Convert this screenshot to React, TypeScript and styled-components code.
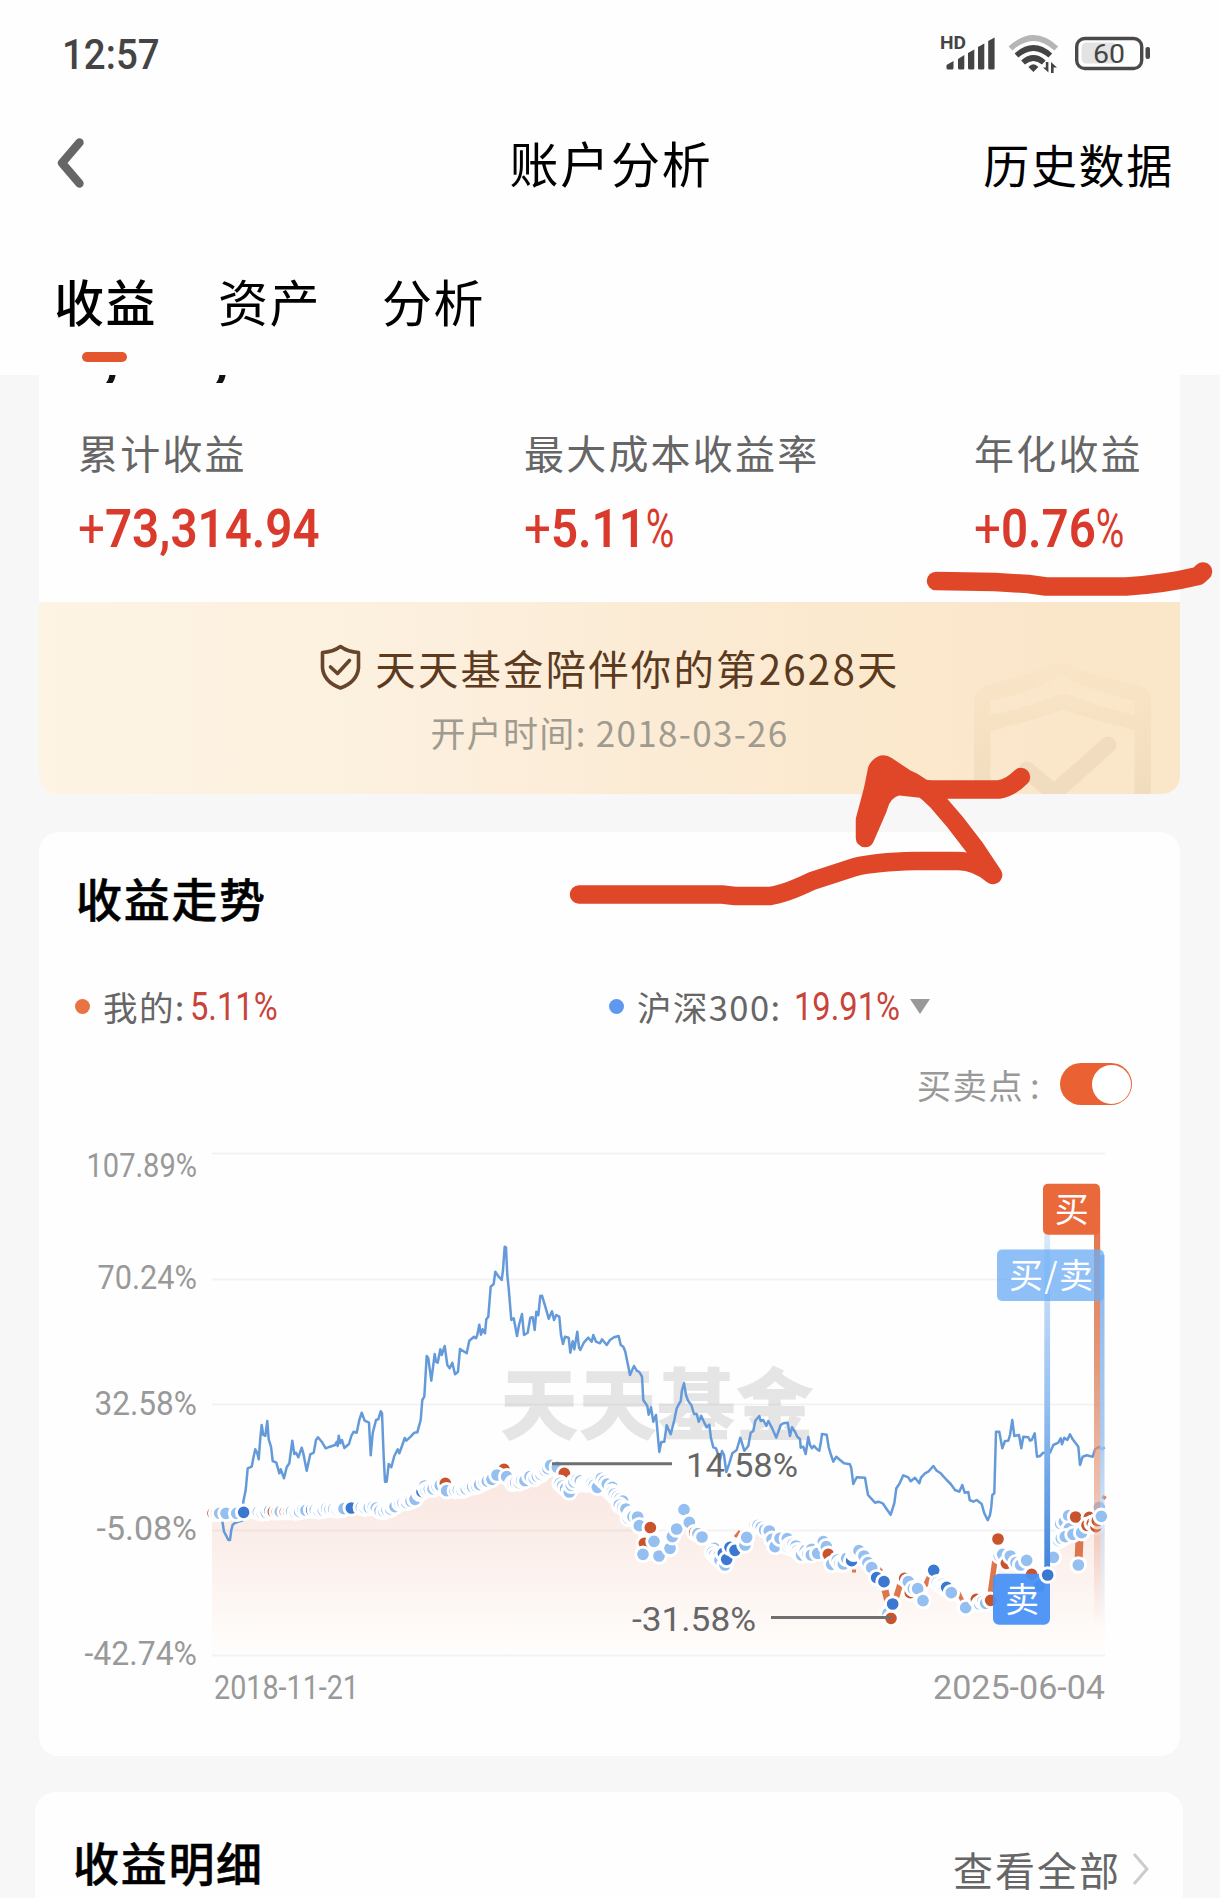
import React from "react";
import styled, { createGlobalStyle } from "styled-components";

const CJK = '"Noto Sans CJK SC", "Noto Sans", sans-serif';
const LATIN = 'Roboto, "Noto Sans CJK SC", sans-serif';

const GlobalStyle = createGlobalStyle`
  * { box-sizing: border-box; }
  body { margin: 0; background: #f7f7f7; font-family: ${CJK}; }
  svg { display: block; }
`;

const Screen = styled.div`
  position: relative;
  width: 1220px;
  height: 1898px;
  overflow: hidden;
  background: #f7f7f7;
  display: flex;
  flex-direction: column;
  white-space: nowrap;
`;

const TopArea = styled.header`
  height: 375px;
  flex: none;
  background: #fefefe;
  display: flex;
  flex-direction: column;
`;

const StatusBar = styled.div`
  height: 107px;
  padding: 0 68px 0 62px;
  display: flex;
  align-items: center;
  justify-content: space-between;
`;

const Clock = styled.span`
  font: 500 43px/60px ${LATIN};
  color: #444;
  transform: scaleX(0.895);
  transform-origin: left;
`;

const NavBar = styled.div`
  height: 112px;
  padding: 0 46px 0 56px;
  display: grid;
  grid-template-columns: 1fr auto 1fr;
  align-items: center;
`;

const NavTitle = styled.h1`
  margin: -2px 8px 0 0;
  font-size: 49px;
  font-weight: 400;
  line-height: 70px;
  letter-spacing: 1.8px;
  color: #000;
`;

const NavLink = styled.span`
  justify-self: end;
  margin-top: -1px;
  font-size: 46px;
  line-height: 70px;
  letter-spacing: 1.7px;
  color: #000;
`;

const Tabs = styled.nav`
  display: flex;
  gap: 61px;
  padding: 46px 0 0 54px;
`;

const Tab = styled.div<{ $active?: boolean }>`
  display: flex;
  flex-direction: column;
  align-items: center;
  gap: 16px;
  font-size: 50px;
  line-height: 71px;
  letter-spacing: 1.5px;
  font-weight: ${(p) => (p.$active ? 500 : 400)};
  color: #000;
  &::after {
    content: "";
    width: 45px;
    height: 10px;
    margin-right: 3px;
    border-radius: 5px;
    background: ${(p) => (p.$active ? "#e4572e" : "transparent")};
  }
`;

const Summary = styled.section`
  flex: none;
  width: 1141px;
  height: 419px;
  margin: 0 0 38px 39px;
  background: #fefefe;
  border-radius: 0 0 18px 18px;
  overflow: hidden;
`;

const ClippedAmount = styled.div`
  height: 8px;
  overflow: hidden;
  display: flex;
  gap: 97px;
  padding-left: 69px;
  font: italic 700 54px/8px ${LATIN};
  color: #111;
  span { position: relative; top: -20px; }
`;

const Metrics = styled.div`
  height: 219px;
  padding: 40px 0 0 39px;
  display: grid;
  grid-template-columns: 446px 450px auto;
  align-content: start;
`;

const MetricLabel = styled.div`
  font-size: 40px;
  line-height: 58px;
  letter-spacing: 2.2px;
  color: #666;
`;

const MetricValue = styled.div`
  margin-top: 12px;
  font: 600 53.5px/72px ${LATIN};
  color: #d93a2c;
  transform: scaleX(0.888);
  transform-origin: left;
`;

const Sign = styled.span`
  font-weight: 400;
`;

const Percent = styled.span`
  display: inline-block;
  font-weight: 400;
  transform: scaleX(0.82);
  transform-origin: left;
`;

const Banner = styled.div`
  position: relative;
  height: 192px;
  padding: 37px 0 0;
  background: linear-gradient(90deg, #fdf4e3 0%, #fcefdd 35%, #fbe9cf 68%, #fae6c8 100%);
  display: flex;
  flex-direction: column;
  align-items: center;
`;

const BannerTitle = styled.div`
  display: flex;
  align-items: center;
  gap: 14px;
  margin-right: 0;
  font-size: 40.4px;
  line-height: 58px;
  letter-spacing: 2.2px;
  color: #5c3a1e;
`;

const BannerDate = styled.div`
  margin-top: 10px;
  font-size: 35px;
  line-height: 50px;
  letter-spacing: 1.3px;
  color: #a09b90;
`;

const BannerMark = styled.svg`
  position: absolute;
  right: 28px;
  bottom: 0;
`;

const TrendCard = styled.section`
  flex: none;
  width: 1141px;
  height: 924px;
  margin: 0 0 36px 39px;
  border-radius: 20px;
  background: #fefefe;
`;

const SectionTitle = styled.h2`
  margin: 0;
  font-size: 46px;
  line-height: 66px;
  font-weight: 500;
  letter-spacing: 1.7px;
  color: #000;
  -webkit-text-stroke: 0.5px #000;
`;

const TrendHead = styled.div`
  padding: 32px 0 0 37px;
`;

const Legend = styled.div`
  height: 50px;
  margin-top: 50px;
  padding-left: 36px;
  display: grid;
  grid-template-columns: 534px auto;
`;

const LegendItem = styled.div`
  display: flex;
  align-items: center;
`;

const Dot = styled.i<{ $color: string }>`
  width: 15px;
  height: 15px;
  margin-right: 13px;
  border-radius: 50%;
  background: ${(p) => p.$color};
`;

const LegendName = styled.span<{ $width: number }>`
  width: ${(p) => p.$width}px;
  font-size: 34.5px;
  line-height: 50px;
  letter-spacing: 1.4px;
  color: #666;
`;

const LegendValue = styled.span<{ $width: number }>`
  width: ${(p) => p.$width}px;
  margin-top: 2px;
  font: 400 38px/50px ${LATIN};
  color: #c8443a;
  transform: scaleX(0.86);
  transform-origin: left;
`;

const Caret = styled.i`
  border: 10px solid transparent;
  border-top: 15px solid #999;
  border-bottom: 0;
`;

const ToggleRow = styled.div`
  height: 50px;
  margin-top: 29px;
  padding-right: 48px;
  display: flex;
  justify-content: flex-end;
  align-items: center;
  font-size: 34.5px;
  line-height: 50px;
  letter-spacing: 1.3px;
  color: #999;
`;

const Colon = styled.span`
  margin: 0 19px 0 6px;
`;

const Toggle = styled.div`
  width: 72px;
  height: 42px;
  border-radius: 21px;
  background: #ea6234;
  padding: 1.5px;
  display: flex;
  justify-content: flex-end;
  &::after {
    content: "";
    width: 39px;
    height: 39px;
    border-radius: 50%;
    background: #fff;
  }
`;

const ChartArea = styled.div`
  margin-top: 21px;
`;

const DetailCard = styled.section`
  flex: none;
  width: 1148px;
  height: 140px;
  margin-left: 35px;
  padding: 36px 33px 0 38px;
  border-radius: 20px;
  background: #fefefe;
  display: flex;
  justify-content: space-between;
  align-items: flex-start;
`;

const MoreLink = styled.div`
  margin-top: 12px;
  display: flex;
  align-items: center;
  gap: 11px;
  font-size: 40px;
  line-height: 58px;
  letter-spacing: 2px;
  color: #666;
`;

const Markup = styled.svg`
  position: absolute;
  inset: 0;
  pointer-events: none;
`;

const AxisText = styled.text`
  font: 400 32.4px ${LATIN};
  fill: #999;
`;

const CalloutText = styled.text`
  font: 400 34px ${LATIN};
  fill: #666;
`;

const TagText = styled.text`
  font: 400 34px ${CJK};
  fill: #fff;
  text-anchor: middle;
`;

const WatermarkText = styled.text`
  font: 900 78px ${CJK};
  fill: #e5e5e5;
`;

/* ---------- chart data, stored at three units per pixel ---------- */

type Pt = [number, number];

const parse = (s: string, ox: number, oy: number): Pt[] =>
  s.trim().split(/\s+/).map((p) => {
    const [x, y] = p.split(",").map(Number);
    return [ox + x / 3, oy + y / 3];
  });

const toPath = (pts: Pt[]) =>
  "M" + pts.map(([x, y]) => `${x.toFixed(1)} ${y.toFixed(1)}`).join("L");

const INDEX_LINE: Pt[] = [
  ...parse(
    `38,940 62,945 68,970 72,995 80,1010 85,1020 90,1020 94,990 98,974 106,968 130,960 130,905
     137,870 143,805 155,800 160,775 166,748 172,760 176,778 181,715 185,675 190,705 196,708 202,663
     206,718 213,740 218,783 229,788 238,820 242,808 252,835 260,802 268,790 277,722 283,762 288,758
     295,772 305,743 310,760 320,812 331,763 341,758 348,720 354,712 365,725 377,745 390,740 405,735
     410,725 413,738 416,707 421,730 426,720 433,744 447,732 454,708 461,695 470,698 478,660 485,638
     494,662 507,668 512,766 518,700 528,660 535,658 542,634 546,640 551,770 555,845 560,845 566,792
     574,802 583,768 593,748 598,760 606,738 614,714 619,722 632,710 643,698 652,697 662,660 667,600
     673,590 680,468 685,475 694,542 704,462 708,485 713,488 721,448 725,465 734,438 742,495 749,505
     757,488 765,523 774,515 780,447 800,460 808,422 822,410 828,415 832,405 838,374 843,404 848,388
     855,400 859,358 865,350 872,260 881,252 886,215 896,230 905,240 909,210 914,140 918,142 922,225
     926,265 934,360 941,355 951,408 957,375 966,342 972,405 983,398 991,353 998,352 1004,390 1009,335
     1015,346 1021,288 1026,287 1036,320 1046,356 1056,334 1062,360 1069,345 1078,350 1083,405 1089,432
     1095,410 1106,413 1111,458 1118,424 1123,448 1132,395 1137,443 1141,450 1152,427 1165,413 1175,425
     1180,405 1188,425 1200,430`,
    200, 1200
  ),
  ...parse(
    `126,-2 140,15 150,0 162,-8 176,-12 182,15 190,20 196,35 210,105 222,78 230,92 238,96 246,110
     250,180 262,198 266,224 273,202 280,245 288,225 298,336 304,306 313,305 320,256 332,283 343,240
     350,205 358,190 362,184 366,150 372,130 378,165 384,182 394,195 402,222 410,222 416,245 424,228
     433,248 440,262 448,254 453,295 460,322 468,325 474,342 480,360 486,333 492,345 499,396 508,370
     517,340 530,330 541,293 553,332 565,318 572,278 580,273 586,242 598,228 602,243 610,240 619,258
     625,243 635,262 649,293 662,255 670,250 683,248 690,288 696,262 705,275 712,290 720,297 722,323
     730,320 737,342 745,291 750,315 756,325 762,317 770,327 778,332 782,310 786,282 800,284 806,322
     813,345 820,365 829,350 840,360 852,370 870,373 874,385 880,432 890,412 915,413 924,465 945,488
     955,485 968,490 982,510 992,524 1003,490 1009,445 1018,432 1030,406 1045,412 1052,424 1065,413
     1078,430 1083,413 1095,400 1105,395 1120,378 1130,392`,
    560, 1340
  ),
  ...parse(
    `122,400 140,420 152,432 165,450 178,455 187,435 194,458 205,456 209,480 220,485 230,480 245,492
     253,520 263,541 270,525 274,500 277,465 283,460 288,275 298,275 307,325 315,303 325,302 330,285
     337,240 343,288 357,285 364,325 370,290 385,292 390,302 395,300 404,280 411,350 420,348 430,338
     450,338 460,315 475,308 482,295 486,313 493,293 502,300 510,283 518,298 535,320 540,375 548,350
     560,346 578,350 585,328 597,320 606,328 614,322`,
    900, 1340
  ),
];

const COLORS: Record<string, string> = { l: "#94bff0", b: "#3b78d2", o: "#c9532c" };

interface Mark { x: number; y: number; c: string; }

/* each entry: x,y,colour[,gap]; a gap starts a run of tightly packed trades up to the next entry */
const marks = (s: string, ox: number, oy: number): Mark[] => {
  const rows = s.trim().split(/\s+/).map((r) => r.split(","));
  const out: Mark[] = [];
  rows.forEach((r, i) => {
    const x = +r[0], y = +r[1];
    out.push({ x: ox + x / 3, y: oy + y / 3, c: r[2] });
    const next = rows[i + 1];
    if (r[3] && next) {
      const nx = +next[0], ny = +next[1];
      let k = 0;
      for (let fx = x + +r[3]; fx < nx - 6; fx += [9, 11, 7, 6, 10][k % 5]) {
        const t = (fx - x) / (nx - x);
        const jitter = [0, 3, -3, 2, -3][k % 5];
        out.push({ x: ox + fx / 3, y: oy + (y + t * (ny - y) + jitter) / 3, c: "l" });
        k++;
      }
    }
  });
  return out;
};

const TRADES: Mark[] = [
  ...marks(
    `39,940,o 50,940,o 59,940,l 78,940,l 110,940,l 131,937,b,44 220,935,o 232,935,o,9 256,935,o 266,935,o,9
     335,930,b,11 390,928,l,11 432,926,l 454,924,b,30 520,920,l,9 552,935,l,9 600,910,l,9 645,898,l
     660,880,o 666,875,b 674,858,l 679,870,l,9 712,860,l,9 736,850,o 740,872,l 766,872,b,9
     830,858,l,9 853,847,l,9 876,838,l 912,808,o 891,825,l 920,830,l 938,850,l,9 975,842,l,9 990,830,l
     1003,836,l,9 1030,815,l 1036,812,l 1044,806,l 1052,796,l 1072,802,l 1093,820,o 1080,850,l 1088,858,l 1097,866,l
     1108,876,l 1114,856,l 1122,846,l 1132,838,l,9 1160,852,l,8 1174,850,l`,
    200, 1200
  ),
  ...marks(
    `80,430,l,8 95,430,l,8 112,442,l 124,415,l 133,424,l 142,432,l 157,442,l 156,456,l 163,462,l 172,470,l 180,476,l
     188,483,l 178,495,l 188,503,l 198,507,l 213,522,b 205,535,l 212,528,l 219,530,l 233,531,l 238,557,l 271,563,o
     253,610,o 249,643,l 282,604,l 297,648,l 330,625,l 337,590,l 350,567,l 372,509,l 388,547,l 404,578,o 414,581,l
     426,591,l 463,625,l 457,637,l 464,645,l 472,652,l 478,645,l 480,660,l 490,640,b 495,675,l 500,658,b 510,622,b
     525,631,b 555,615,l 560,592,l 586,554,o 594,556,l 604,562,l 614,570,l 628,573,l 636,598,l 645,620,l 660,595,l
     682,596,l 684,620,l 691,614,l 699,612,l 708,618,l 712,632,l 718,640,l 725,645,l 736,632,l 744,642,l 755,628,l
     754,645,l 773,640,l 790,605,l 799,620,l 805,643,o 815,673,l 832,660,l 840,670,l 850,672,l 860,655,l 875,662,b
     882,640,l 889,636,l 897,632,l 912,648,l 924,668,l 935,683,l 950,713,b 972,725,b 984,820,l 993,835,o 998,792,b
     1034,715,o 1045,725,l 1051,758,o 1060,746,l 1073,746,l 1089,782,l 1121,691,b 1132,728,l 1140,734,l 1148,733,l
     1152,742,l 1160,742,b 1174,758,l`,
    560, 1340
  ),
  ...marks(
    `197,803,l 229,778,o 239,792,l 248,785,l 257,790,l 272,781,o 294,597,o 298,647,l 308,643,l 319,670,o
     331,648,l 348,668,l 362,675,l 380,661,l 395,703,o 418,738,b 460,652,l 482,551,l 493,545,l 506,527,l
     476,602,l 484,595,l 508,566,l 496,590,l 519,583,l 527,531,o 545,578,l 535,675,l 568,532,o 561,556,o
     577,550,o 588,560,o 592,542,o 598,502,l`,
    900, 1340
  ),
];

const TOP_TRADES = marks("443,705,b 604,529,l", 900, 1340);

const AREA_TOP: Pt[] = [
  ...parse(
    `36,960 130,958 330,952 450,945 520,940 550,950 600,930 670,888 760,888 850,868 890,845 940,868
     1000,855 1050,820 1110,890 1160,870`,
    200, 1200
  ),
  ...parse(
    `112,455 180,520 235,585 250,660 297,665 345,610 380,560 440,620 495,690 560,625 595,575 645,635
     720,660 800,660 850,685 910,665 960,735 990,840 1020,760 1060,770 1090,795 1120,710 1174,775`,
    560, 1340
  ),
  ...parse("197,815 270,795 300,665 360,690 440,720 480,620 540,600 600,570 614,540", 900, 1340),
];

const AXIS = [
  { label: "107.89%", x: 86.5, y: 1177, line: 1153.5 },
  { label: "70.24%", x: 97.5, y: 1289, line: 1279.5 },
  { label: "32.58%", x: 94.5, y: 1414.5, line: 1404.5 },
  { label: "-5.08%", x: 96.5, y: 1540, line: 1530.5 },
  { label: "-42.74%", x: 84.5, y: 1665, line: 1655.5 },
];

const Trades = ({ items }: { items: Mark[] }) => (
  <g stroke="#fff" strokeWidth="2.9">
    {items.map((m, i) => (
      <circle key={i} cx={m.x} cy={m.y} r="7.3" fill={COLORS[m.c]} />
    ))}
  </g>
);

const TrendChart = () => (
  <svg width="1141" height="600" viewBox="39 1130 1141 600">
    <defs>
      <linearGradient id="area" gradientUnits="userSpaceOnUse" x1="0" x2="0" y1="1465" y2="1650">
        <stop offset="0" stopColor="#fae6e0" />
        <stop offset="0.45" stopColor="#fbefeb" />
        <stop offset="1" stopColor="#fffdfb" />
      </linearGradient>
      <linearGradient id="sellBar" x1="0" x2="0" y1="0" y2="1">
        <stop offset="0" stopColor="#dbe9fb" />
        <stop offset="0.5" stopColor="#94c0f0" />
        <stop offset="1" stopColor="#3f83dc" />
      </linearGradient>
      <linearGradient id="buyBar" x1="0" x2="0" y1="0" y2="1">
        <stop offset="0" stopColor="#e96a3c" />
        <stop offset="0.4" stopColor="#dd8763" stopOpacity="0.85" />
        <stop offset="0.7" stopColor="#e2967a" stopOpacity="0.6" />
        <stop offset="1" stopColor="#e9a890" stopOpacity="0" />
      </linearGradient>
      <linearGradient id="mixBar" x1="0" x2="0" y1="0" y2="1">
        <stop offset="0" stopColor="#87b7ee" />
        <stop offset="0.5" stopColor="#9cc2ef" stopOpacity="0.85" />
        <stop offset="1" stopColor="#b8cbea" stopOpacity="0" />
      </linearGradient>
    </defs>

    <WatermarkText x="500" y="1434" textLength="314" lengthAdjust="spacingAndGlyphs">天天基金</WatermarkText>

    <path d={`${toPath(AREA_TOP)}L1104.7 1655L212 1655Z`} fill="url(#area)" />
    {AXIS.map((a) => (
      <g key={a.label}>
        <rect x="212" y={a.line - 0.9} width="893" height="1.8" fill="#8a8f9a" fillOpacity="0.11" />
        <AxisText x={a.x} y={a.y} textLength={197 - a.x} lengthAdjust="spacingAndGlyphs">{a.label}</AxisText>
      </g>
    ))}
    <AxisText x="214" y="1699" textLength="145" lengthAdjust="spacingAndGlyphs">2018-11-21</AxisText>
    <AxisText x="933" y="1699" textLength="172" lengthAdjust="spacingAndGlyphs">2025-06-04</AxisText>

    <path d={toPath(INDEX_LINE)} fill="none" stroke="#649ada" strokeWidth="2.5" strokeLinejoin="round" />

    <g fill="none" stroke="#dd754d">
      <path d="M1079.5 1538L1078.5 1562" strokeWidth="8" />
      <path d="M995 1560L990.5 1592" strokeWidth="5.5" />
      <path d="M930 1575L925 1586" strokeWidth="5" />
      <path d="M885 1590L888 1602" strokeWidth="7" />
      <path d="M900 1585L896 1598" strokeWidth="6" />
      <path d="M958 1592L963 1602" strokeWidth="4" />
      <path d="M1103 1499L1105 1496" strokeWidth="4" />
      <path d="M735 1537L740 1531M852 1571L856 1571M879 1568L882 1571" strokeWidth="3" />
    </g>
    <Trades items={TRADES} />

    <rect x="1044.3" y="1234" width="5.8" height="341" fill="url(#sellBar)" />
    <rect x="1094" y="1190" width="6.2" height="435" fill="url(#buyBar)" />
    <rect x="1100" y="1255" width="4.5" height="370" fill="url(#mixBar)" />

    <rect x="1043" y="1183.7" width="57" height="51" rx="5" fill="#ea693a" />
    <TagText x="1071.8" y="1222">买</TagText>
    <rect x="997" y="1249.5" width="107" height="51.5" rx="5" fill="#6eaef5" fillOpacity="0.78" />
    <TagText x="1051" y="1288" textLength="84">买/卖</TagText>
    <rect x="993" y="1573.7" width="57" height="51" rx="6" fill="#4791f4" fillOpacity="0.94" />
    <TagText x="1022" y="1612">卖</TagText>
    <Trades items={TOP_TRADES} />

    <path d="M552 1463.7H672M771 1617.5H891" stroke="#707070" strokeWidth="3" />
    <CalloutText x="686" y="1476.8" textLength="112" lengthAdjust="spacingAndGlyphs">14.58%</CalloutText>
    <CalloutText x="632" y="1630.6" textLength="124" lengthAdjust="spacingAndGlyphs">-31.58%</CalloutText>
  </svg>
);

const StatusIcons = () => (
  <svg width="212" height="44" viewBox="940 32 212 44">
    <text x="940" y="49" fontFamily="Roboto, sans-serif" fontWeight="700" fontSize="18" fill="#444" textLength="26" lengthAdjust="spacingAndGlyphs">HD</text>
    <g fill="#444">
      <path d="M946.5 65L953.5 61V68Q953.5 69.5 952 69.5H948Q946.5 69.5 946.5 68Z" />
      <path d="M958 59L964.3 55V68Q964.3 69.5 963 69.5H959.5Q958 69.5 958 68Z" />
      <path d="M968 53L974.3 49.5V68Q974.3 69.5 973 69.5H969.5Q968 69.5 968 68Z" />
      <path d="M978 47L984.3 43.5V68Q984.3 69.5 983 69.5H979.5Q978 69.5 978 68Z" />
      <path d="M988.2 41L994.6 37.5V68Q994.6 69.5 993.2 69.5H989.6Q988.2 69.5 988.2 68Z" />
    </g>
    <g fill="none" strokeWidth="5.6">
      <path d="M1010.5 48.5Q1033.4 27.5 1056.3 48.5" stroke="#b5b5b5" />
      <path d="M1016.5 55.5Q1033.4 40.5 1050.3 55.5" stroke="#444" />
      <path d="M1023 62.5Q1033.4 53.5 1043.8 62.5" stroke="#444" />
    </g>
    <path d="M1028.4 67Q1033.4 61.5 1038.4 67L1033.4 72Z" fill="#444" />
    <path d="M1048.4 62V72.5L1043 67.5H1045.8V62ZM1051 73V62L1057 67.5H1053.6V73Z" fill="#444" />
    <rect x="1076.7" y="38.5" width="65" height="30" rx="8" fill="none" stroke="#4a4a4a" strokeWidth="3.4" />
    <path d="M1087 42.5H1114V63.5H1087Q1081.5 63.5 1081.5 58V48Q1081.5 42.5 1087 42.5Z" fill="#e3e3e3" />
    <text x="1093" y="62.5" fontFamily="Roboto, sans-serif" fontSize="26" fill="#444" textLength="32" lengthAdjust="spacingAndGlyphs">60</text>
    <rect x="1145.5" y="47" width="4.5" height="12" rx="2" fill="#4a4a4a" />
  </svg>
);

const ShieldMark = () => (
  <BannerMark width="178" height="134" viewBox="973 660 178 134">
    <defs>
      <linearGradient id="shield" x1="0" x2="0" y1="0" y2="1">
        <stop offset="0" stopColor="#f9e2c4" stopOpacity="0.5" />
        <stop offset="1" stopColor="#f1dcbd" />
      </linearGradient>
    </defs>
    <path fillRule="evenodd" fill="url(#shield)" d="M973 794V702Q973 690 985 685Q1025 676 1052 664Q1060 661 1068 664Q1096 677 1138 685Q1150 690 1150 702V794H1133.5V730Q1092 720 1062 710Q1030 721 989.5 731V794ZM989.5 701V715Q1032 706 1056 695Q1062 693 1068 695Q1096 706 1133.5 715V701Q1090 691 1061 676Q1030 692 989.5 701Z" />
    <path d="M1026 770L1053 793L1107 745" fill="none" stroke="#f2dcbf" strokeWidth="17" strokeLinecap="round" strokeLinejoin="round" />
  </BannerMark>
);

export default function App() {
  return (
    <Screen>
      <GlobalStyle />
      <TopArea>
        <StatusBar>
          <Clock>12:57</Clock>
          <StatusIcons />
        </StatusBar>
        <NavBar>
          <svg width="32" height="54" viewBox="57 136 32 54">
            <path d="M80.5 142.5L63 163L80.5 183.5" fill="none" stroke="#666" strokeWidth="8.4" strokeLinecap="round" strokeLinejoin="round" />
          </svg>
          <NavTitle>账户分析</NavTitle>
          <NavLink>历史数据</NavLink>
        </NavBar>
        <Tabs>
          <Tab $active>收益</Tab>
          <Tab>资产</Tab>
          <Tab>分析</Tab>
        </Tabs>
      </TopArea>

      <Summary>
        <ClippedAmount><span>,</span><span>,</span></ClippedAmount>
        <Metrics>
          <div>
            <MetricLabel>累计收益</MetricLabel>
            <MetricValue><Sign>+</Sign>73,314.94</MetricValue>
          </div>
          <div>
            <MetricLabel>最大成本收益率</MetricLabel>
            <MetricValue><Sign>+</Sign>5.11<Percent>%</Percent></MetricValue>
          </div>
          <div>
            <MetricLabel>年化收益</MetricLabel>
            <MetricValue><Sign>+</Sign>0.76<Percent>%</Percent></MetricValue>
          </div>
        </Metrics>
        <Banner>
          <ShieldMark />
          <BannerTitle>
            <svg width="42" height="48" viewBox="318 645 42 48" fill="none" stroke="#66452c" strokeWidth="3.6" strokeLinecap="round" strokeLinejoin="round">
              <path d="M339.5 647.5Q347 653 357.5 653.5V669Q356 683 339.5 689Q323 683 321.5 669V653.5Q332 653 339.5 647.5Z" />
              <path d="M329.5 668L336.5 674.5L348.5 661.5" />
            </svg>
            天天基金陪伴你的第2628天
          </BannerTitle>
          <BannerDate>开户时间: 2018-03-26</BannerDate>
        </Banner>
      </Summary>

      <TrendCard>
        <TrendHead><SectionTitle>收益走势</SectionTitle></TrendHead>
        <Legend>
          <LegendItem>
            <Dot $color="#e87443" />
            <LegendName $width={87}>我的:</LegendName>
            <LegendValue $width={90}>5.11%</LegendValue>
          </LegendItem>
          <LegendItem>
            <Dot $color="#5f98ef" />
            <LegendName $width={157}>沪深300:</LegendName>
            <LegendValue $width={116}>19.91%</LegendValue>
            <Caret />
          </LegendItem>
        </Legend>
        <ToggleRow>
          买卖点<Colon>:</Colon>
          <Toggle />
        </ToggleRow>
        <ChartArea><TrendChart /></ChartArea>
      </TrendCard>

      <DetailCard>
        <SectionTitle>收益明细</SectionTitle>
        <MoreLink>
          查看全部
          <svg width="18" height="34" viewBox="0 0 18 34">
            <path d="M2 2L15 17L2 32" fill="none" stroke="#ccc" strokeWidth="3" />
          </svg>
        </MoreLink>
      </DetailCard>

      <Markup width="1220" height="1898" viewBox="0 0 1220 1898" fill="none" stroke="#e04628" strokeWidth="18.5" strokeLinecap="round" strokeLinejoin="round">
        <path d="M936 581L995 582L1028 584L1046 586.5H1126Q1165 584 1198 576L1203 571.5" />
        <path d="M579 894.5H722L735 896H770Q785 894 812 881L855 867Q875 862 915 861H958Q976 861 993 875L975 848L955 822L937 801Q920 784 905 778L887 766Q881 762 877 770L873 790L865 820V838L878 808Q882 790 898 786L930 789.5H999Q1010 788 1021 777" />
        <path d="M880 768L876 790L900 782Z" strokeWidth="14" />
      </Markup>
    </Screen>
  );
}
